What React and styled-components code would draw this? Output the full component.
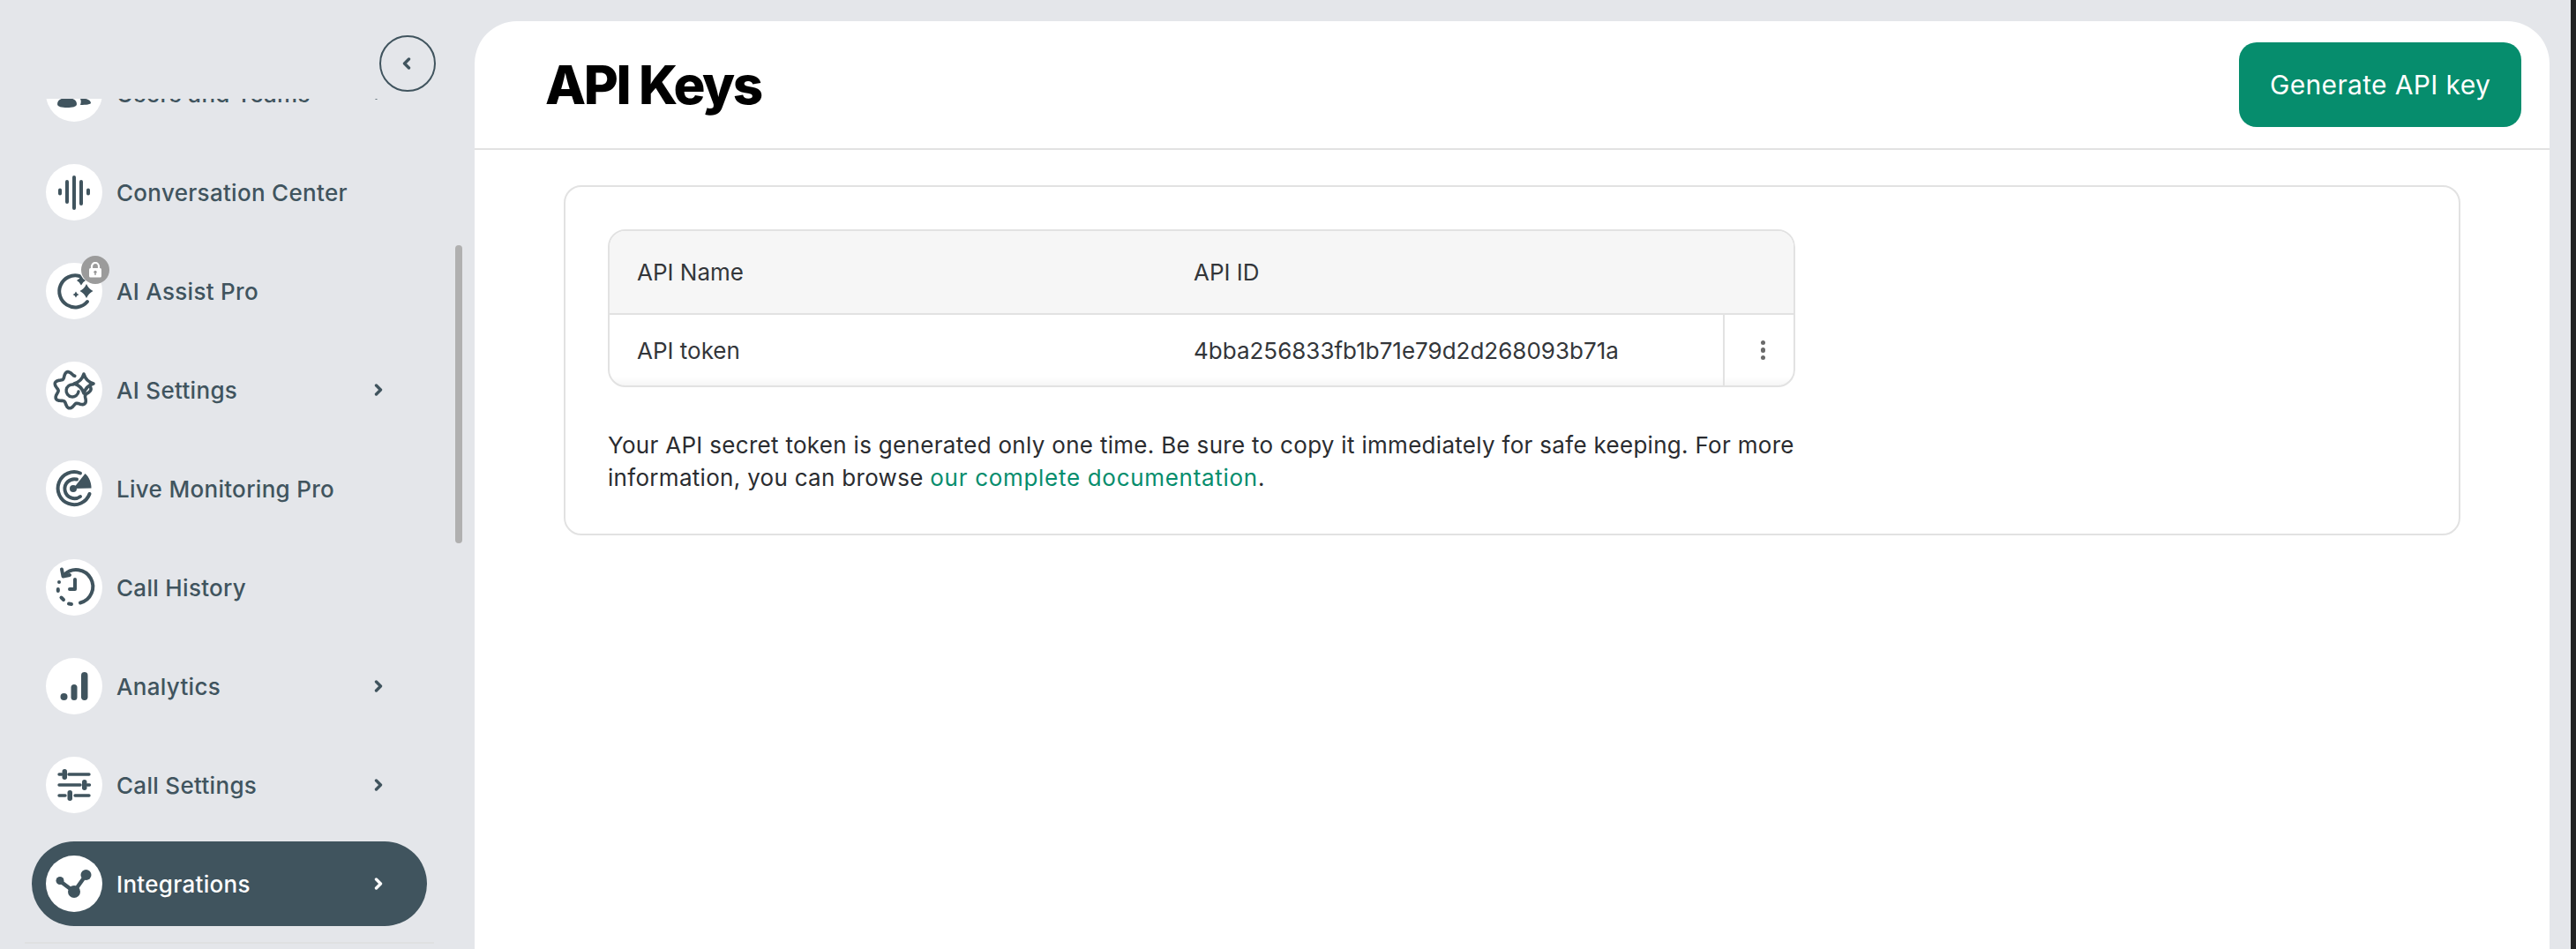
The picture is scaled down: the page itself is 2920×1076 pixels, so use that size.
import React from 'react'
import styled, { createGlobalStyle } from 'styled-components'

const slate = '#40545e'
const green = '#068d6d'
const line = '#e2e2e2'

const GlobalStyle = createGlobalStyle`
  html, body {
    margin: 0;
    height: 100%;
    background: #e4e6ea;
    font-family: Inter, "Noto Sans", sans-serif;
  }
  #root {
    height: 100%;
  }
`

// wavy outline of the gear, open at the top right where the sparkle sits
const gearPath = () => {
  const pts = []
  for (let deg = -8; deg <= 282; deg += 3) {
    const a = (deg * Math.PI) / 180
    const r = 18.5 + 2.6 * Math.cos(7 * a + 0.4)
    pts.push(`${(30 + r * Math.cos(a)).toFixed(1)} ${(32 + r * Math.sin(a)).toFixed(1)}`)
  }
  return 'M' + pts.join('L')
}

const Svg = ({ children }) => (
  <svg width="64" height="64" viewBox="0 0 64 64" fill="none" stroke={slate} strokeWidth="4" strokeLinecap="round" strokeLinejoin="round">
    {children}
  </svg>
)

const UsersIcon = () => (
  <Svg>
    <circle cx="24" cy="30" r="7" fill={slate} stroke="none" />
    <path d="M13 44c0-5 5-7 11-7s11 2 11 7c0 3-5 4-11 4s-11-1-11-4Z" fill={slate} stroke="none" />
    <circle cx="42" cy="30" r="5" fill={slate} stroke="none" />
    <path d="M39 38c6-1 12 1 12 5 0 1-5 2-12 2 1-3 1-5 0-7Z" fill={slate} stroke="none" />
  </Svg>
)

const WaveIcon = () => (
  <Svg>
    <path d="M16 29.500v4M24 20v23M32 15v35M40 20v25M48 29.500v4" />
  </Svg>
)

const AssistIcon = () => (
  <Svg>
    <path d="M38 15A18 18 0 1 0 47 44" />
    <path fill={slate} stroke="none" d="M46 24q2.500 5.500 7.500 8-5 2.500-7.500 8-2.500-5.500-7.500-8 5-2.500 7.500-8ZM40 14.500q1.700 3.800 5 5.500-3.300 1.700-5 5.500-1.700-3.800-5-5.500 3.300-1.700 5-5.500ZM34 32.500q.900 2.600 3.500 3.500-2.600.900-3.500 3.500-.900-2.600-3.500-3.500 2.600-.900 3.500-3.500Z" />
  </Svg>
)

const GearIcon = () => (
  <Svg>
    <path d={gearPath()} strokeWidth="3.600" />
    <path d="M43 14Q45.500 22.500 54 25 45.500 27.500 43 36 40.500 27.500 32 25 40.500 22.500 43 14Z" strokeWidth="3.600" />
    <path d="M31 26A7 7 0 1 0 37 34" strokeWidth="3.400" />
  </Svg>
)

const RadarIcon = () => (
  <Svg>
    <path d="M39 14.500A18.500 18.500 0 1 0 49.500 38" />
    <path d="M35 21.500A11 11 0 1 0 39 41" />
    <circle cx="31" cy="32" r="4" fill={slate} stroke="none" />
    <path d="M31 32 44.500 15C49 19 51.500 25 51.500 31.500Z" fill={slate} stroke="none" />
  </Svg>
)

const HistoryIcon = () => (
  <Svg>
    <path d="M21 17.500A19 19 0 1 1 39 49.500" />
    <path d="M18 11.500 19.500 19.500 27 18" />
    <path d="M15 26v.100M13.800 34v2M17.500 43.500l2.500 2.500M26 50.500l3 .500" />
    <path d="M33 23v11h-6" />
  </Svg>
)

const BarsIcon = () => (
  <Svg>
    <circle cx="20.500" cy="44" r="4" fill={slate} stroke="none" />
    <rect x="28.500" y="30" width="7" height="18" rx="3.500" fill={slate} stroke="none" />
    <rect x="40" y="16" width="7.500" height="32" rx="3.700" fill={slate} stroke="none" />
  </Svg>
)

const SlidersIcon = () => (
  <Svg>
    <path d="M15 20h3M26 20h23M15 32h24M47 32h2.500M15 44h7M33 44h16" strokeWidth="3.400" />
    <rect x="18.500" y="14" width="5.500" height="12" rx="2.700" fill={slate} stroke="none" />
    <rect x="41" y="26" width="5.500" height="12" rx="2.700" fill={slate} stroke="none" />
    <rect x="24.500" y="38" width="5.500" height="12" rx="2.700" fill={slate} stroke="none" />
  </Svg>
)

const NodesIcon = () => (
  <Svg>
    <path d="M16 29 32 41 45.500 22" strokeWidth="4.500" />
    <circle cx="32" cy="41" r="7" fill={slate} stroke="none" />
    <circle cx="45.500" cy="22" r="6" fill={slate} stroke="none" />
    <circle cx="16" cy="28.500" r="4.500" fill={slate} stroke="none" />
  </Svg>
)

const Chevron = ({ dir = 'right', color = slate }) => (
  <svg width="10" height="14" viewBox="0 0 10 14" fill="none" stroke={color} strokeWidth="3.400" strokeLinecap="round" strokeLinejoin="round">
    <path d={dir === 'right' ? 'M2.500 2l5 5-5 5' : 'M7.500 2l-5 5 5 5'} />
  </svg>
)

const Shell = styled.div`
  display: flex;
  height: 100%;
  overflow: hidden;
`

const Sidebar = styled.aside`
  position: relative;
  flex: 0 0 538px;
  display: flex;
  flex-direction: column;
  padding-top: 112px;
  box-sizing: border-box;
`

const Collapse = styled.button`
  position: absolute;
  top: 40px;
  right: 44px;
  width: 64px;
  height: 64px;
  padding: 0 2px 0 0;
  display: flex;
  align-items: center;
  justify-content: center;
  background: transparent;
  border: 2.5px solid ${slate};
  border-radius: 50%;
`

const Scroller = styled.div`
  position: relative;
  flex: 1;
  overflow: hidden;
`

const Thumb = styled.div`
  position: absolute;
  top: 166px;
  left: 516px;
  width: 8px;
  height: 338px;
  border-radius: 4px;
  background: #b0b0b0;
`

const NavList = styled.nav`
  display: flex;
  flex-direction: column;
  gap: 16px;
  margin-top: -54px;
  padding-left: 36px;
  width: 448px;
`

const NavItem = styled.a`
  display: flex;
  align-items: center;
  gap: 16px;
  height: 96px;
  flex: none;
  padding: 0 50px 0 16px;
  border-radius: 48px;
  background: ${(p) => (p.$active ? slate : 'transparent')};
  color: ${(p) => (p.$active ? '#fff' : slate)};
`

const IconDisc = styled.span`
  position: relative;
  flex: none;
  width: 64px;
  height: 64px;
  border-radius: 50%;
  background: #fff;
  display: flex;
`

const LockBadge = styled.span`
  position: absolute;
  top: -8px;
  right: -8px;
  width: 32px;
  height: 32px;
  border-radius: 50%;
  background: #9b9b9b;
  display: flex;
  align-items: center;
  justify-content: center;
`

const NavLabel = styled.span`
  flex: 1;
  font-size: 26px;
  font-weight: 500;
  letter-spacing: 0.3px;
  white-space: nowrap;
`

const SideDivider = styled.div`
  height: 2px;
  margin: 0 46px 6px 28px;
  background: #dfe0e1;
`

const Main = styled.main`
  flex: 1;
  margin-top: 24px;
  background: #fff;
  border-radius: 48px 48px 0 0;
  display: flex;
  flex-direction: column;
  min-width: 0;
`

const Gutter = styled.div`
  flex: 0 0 24px;
`

const WindowEdge = styled.div`
  flex: 0 0 6px;
  background: #232323;
`

const PageHeader = styled.header`
  height: 144px;
  flex: none;
  display: flex;
  align-items: center;
  justify-content: space-between;
  padding: 0 32px 0 80px;
  border-bottom: 2px solid ${line};
`

const Title = styled.h1`
  margin: 0;
  font-size: 60px;
  font-weight: 800;
  color: #000;
  letter-spacing: -2.4px;
`

const GenerateButton = styled.button`
  width: 320px;
  height: 96px;
  border: 0;
  border-radius: 20px;
  background: ${green};
  color: #fff;
  font-family: inherit;
  font-size: 30px;
  font-weight: 400;
  letter-spacing: 0.35px;
`

const Content = styled.div`
  padding: 40px 101px 0;
`

const Card = styled.section`
  border: 2px solid ${line};
  border-radius: 20px;
  padding: 48px 48px 45px;
`

const Table = styled.div`
  width: 1346px;
  box-sizing: border-box;
  border: 2px solid ${line};
  border-radius: 20px;
  overflow: hidden;
  color: #33363a;
  font-size: 26px;
`

const HeadRow = styled.div`
  display: grid;
  grid-template-columns: 662px 1fr;
  align-items: center;
  height: 93px;
  background: #f6f6f6;
  border-bottom: 2px solid ${line};
`

const BodyRow = styled.div`
  display: grid;
  grid-template-columns: 662px 1fr 80px;
  align-items: stretch;
  height: 80px;
  box-shadow: inset 0 -14px 12px -12px rgba(0, 0, 0, 0.06);
`

const Cell = styled.div`
  display: flex;
  align-items: center;
  padding-left: ${(p) => (p.$first ? '31px' : '0')};
`

const MenuCell = styled.div`
  display: flex;
  flex-direction: column;
  align-items: center;
  justify-content: center;
  gap: 3px;
  padding-left: 9px;
  border-left: 2px solid ${line};
`

const Dot = styled.i`
  width: 5.5px;
  height: 5.5px;
  border-radius: 50%;
  background: #6a6a6a;
`

const Note = styled.p`
  margin: 47px 0 0;
  width: 1346px;
  font-size: 26px;
  line-height: 37px;
  letter-spacing: 0.3px;
  color: #2a2c30;
`

const DocLink = styled.a`
  color: ${green};
  letter-spacing: 0.7px;
`

export default function App() {
  const items = [
    { label: 'Users and Teams', icon: <UsersIcon />, arrow: true },
    { label: 'Conversation Center', icon: <WaveIcon /> },
    { label: 'AI Assist Pro', icon: <AssistIcon />, locked: true },
    { label: 'AI Settings', icon: <GearIcon />, arrow: true },
    { label: 'Live Monitoring Pro', icon: <RadarIcon /> },
    { label: 'Call History', icon: <HistoryIcon /> },
    { label: 'Analytics', icon: <BarsIcon />, arrow: true },
    { label: 'Call Settings', icon: <SlidersIcon />, arrow: true },
    { label: 'Integrations', icon: <NodesIcon />, arrow: true, active: true },
  ]

  return (
    <Shell>
      <GlobalStyle />
      <Sidebar>
        <Collapse>
          <Chevron dir="left" />
        </Collapse>
        <Scroller>
          <NavList>
            {items.map((item) => (
              <NavItem key={item.label} $active={item.active}>
                <IconDisc>
                  {item.icon}
                  {item.locked && (
                    <LockBadge>
                      <svg width="16" height="18" viewBox="0 0 16 18">
                        <path d="M4 8V5a4 4 0 0 1 8 0v3" fill="none" stroke="#fff" strokeWidth="2.200" />
                        <rect x="1" y="7" width="14" height="10.500" rx="1.500" fill="#fff" />
                        <circle cx="8" cy="11.500" r="1.700" fill="#9b9b9b" />
                        <rect x="7.300" y="12" width="1.400" height="3" fill="#9b9b9b" />
                      </svg>
                    </LockBadge>
                  )}
                </IconDisc>
                <NavLabel>{item.label}</NavLabel>
                {item.arrow && <Chevron color={item.active ? '#fff' : slate} />}
              </NavItem>
            ))}
          </NavList>
          <Thumb />
        </Scroller>
        <SideDivider />
      </Sidebar>
      <Main>
        <PageHeader>
          <Title>API Keys</Title>
          <GenerateButton>Generate API key</GenerateButton>
        </PageHeader>
        <Content>
          <Card>
            <Table>
              <HeadRow>
                <Cell $first>API Name</Cell>
                <Cell>API ID</Cell>
              </HeadRow>
              <BodyRow>
                <Cell $first>API token</Cell>
                <Cell>4bba256833fb1b71e79d2d268093b71a</Cell>
                <MenuCell>
                  <Dot />
                  <Dot />
                  <Dot />
                </MenuCell>
              </BodyRow>
            </Table>
            <Note>
              Your API secret token is generated only one time. Be sure to copy it immediately for safe keeping. For more
              information, you can browse <DocLink>our complete documentation</DocLink>.
            </Note>
          </Card>
        </Content>
      </Main>
      <Gutter />
      <WindowEdge />
    </Shell>
  )
}
